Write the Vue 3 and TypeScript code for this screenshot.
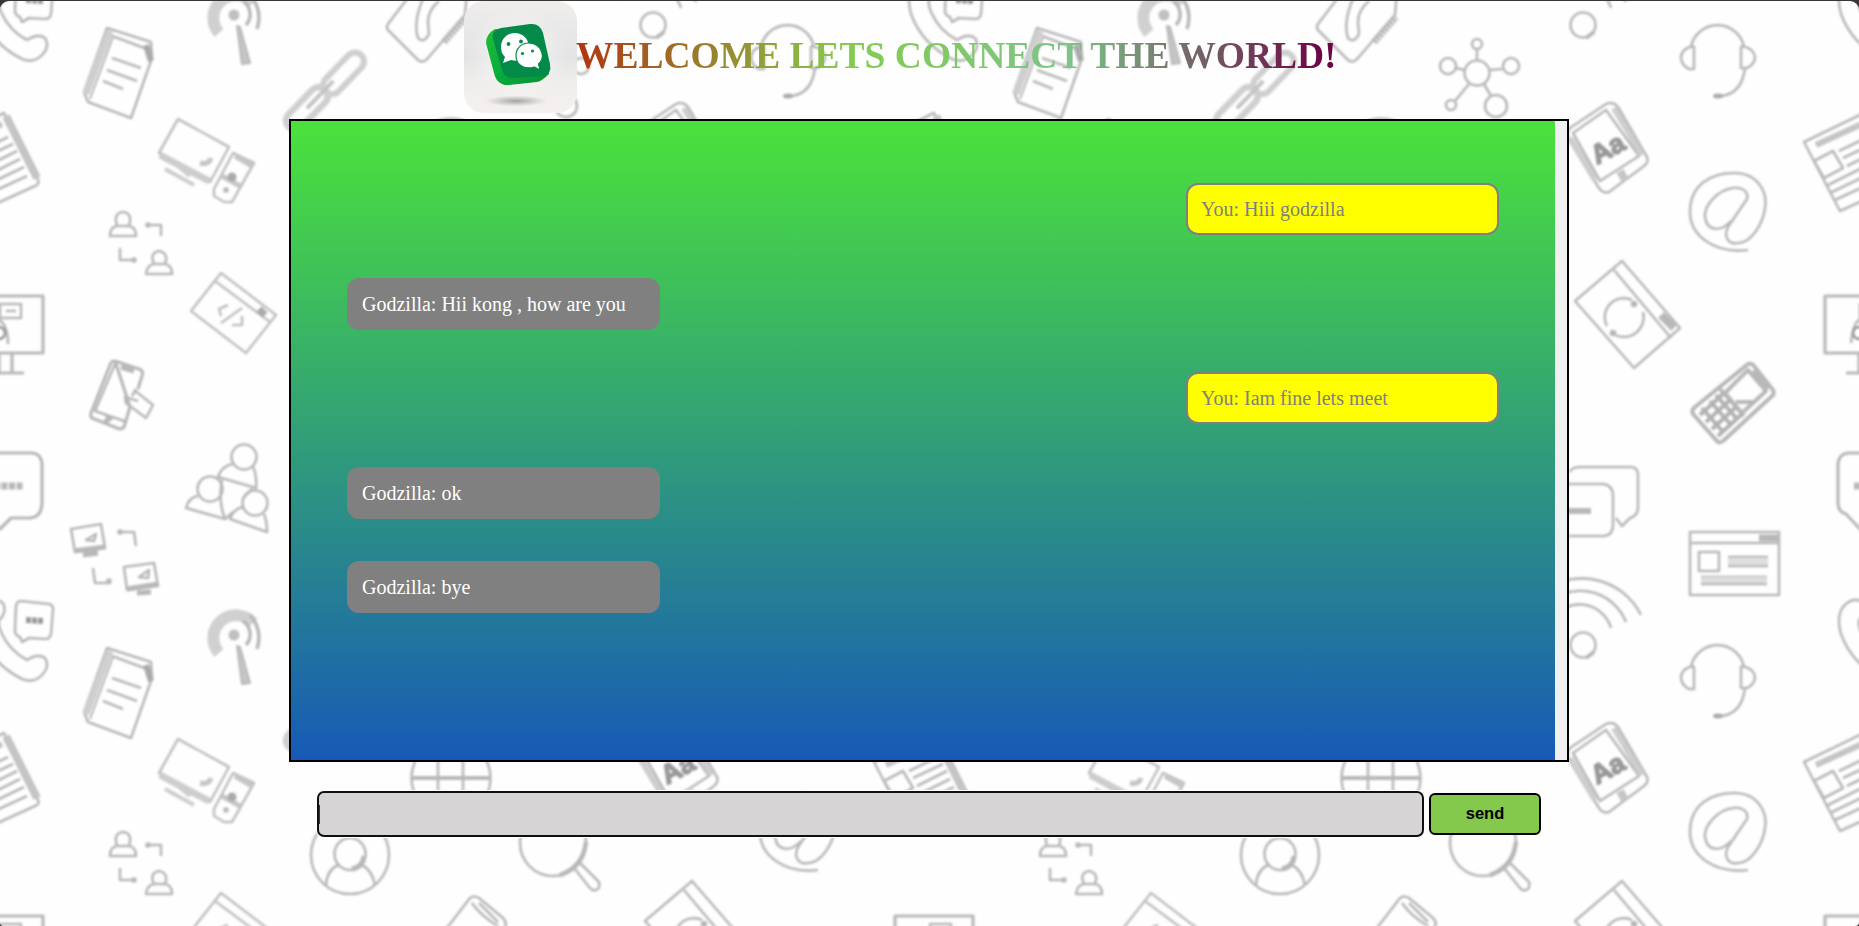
<script setup lang="ts">
import { ref } from 'vue'

interface Message {
  id: number
  author: string
  text: string
  mine: boolean
}

const messages = ref<Message[]>([
  { id: 1, author: 'You', text: 'Hiii godzilla', mine: true },
  { id: 2, author: 'Godzilla', text: 'Hii kong , how are you', mine: false },
  { id: 3, author: 'You', text: 'Iam fine lets meet', mine: true },
  { id: 4, author: 'Godzilla', text: 'ok', mine: false },
  { id: 5, author: 'Godzilla', text: 'bye', mine: false },
])

const draft = ref('')

function send(): void {
  const text = draft.value.trim()
  if (!text) return
  messages.value.push({ id: messages.value.length + 1, author: 'You', text, mine: true })
  draft.value = ''
}

// Origins of the repeated 930 x 620 wallpaper tile.
const tiles = [0, 620].flatMap((y) => [0, 930, 1860].map((x) => ({ x, y })))
</script>

<template>
  <div class="window">
    <div class="page">
      <svg class="wallpaper" viewBox="0 1 1859 925" aria-hidden="true">
        <defs>
          <filter id="soft" x="0" y="0" width="100%" height="100%"><feGaussianBlur stdDeviation="0.95" /></filter>
          <g id="tile" fill="none" stroke="#b8b8b8" stroke-width="2.6" stroke-linejoin="round">
            <!-- phone with bubble -->
            <path d="M21 -19 L49 -16 Q53 -15 53 -11 L51 14 Q50 19 45 19 L29 18 L22 22 L20 17 Q14 15 15 9 L16 -14 Q17 -19 21 -19Z" />
            <path d="M26 0 L43 1" stroke-width="6" stroke="#999" stroke-dasharray="5 1" />
            <path d="M-1 0 Q-2 6 2 14 Q10 31 27 40 Q38 33 45 38 Q50 46 43 54 Q34 64 22 59 Q-8 44 -19 14 Q-25 -8 -13 -17 Q-2 -24 4 -15 Q6 -5 -1 0Z" />
            <!-- notebook -->
            <path d="M107 28 L151 42 L152 58 L131 118 L88 102 L84 92Z M112 36 L147 49" />
            <path d="M110 31 L86 94" stroke-width="7" stroke="#cfcfcf" />
            <path d="M113 37 L90 99" stroke-width="2" />
            <path d="M146 45 L151 61" stroke-width="6" stroke="#aaa" />
            <path d="M112 58 L141 68 M107 70 L137 81 M103 81 L123 89" />
            <!-- antenna -->
            <path d="M219 33 A22 22 0 1 1 253 3" stroke-width="12" stroke="#d0d0d0" />
            <path d="M243 1 A16 16 0 0 1 246 25 M250 -5 Q263 10 257 29" stroke-width="3.5" />
            <circle cx="234" cy="15" r="5.5" fill="#c0c0c0" stroke="none" />
            <path d="M237 26 L242 64 L250 63 L240 27Z" fill="#c6c6c6" stroke-width="2" />
            <!-- computer -->
            <path d="M178 119 L229 147 L210 182 L159 153Z M233 153 L254 163 L232 202 L224 202 L214 196 L214 189Z" stroke="#c0c0c0" />
            <path d="M160 155 L209 181" stroke-width="7" stroke="#cdcdcd" />
            <path d="M178 166 L190 176 M165 169 L194 185" stroke-width="4" stroke="#cdcdcd" />
            <path d="M200 163 Q209 165 211 158 M235 156 L252 166 M222 176 L240 186" stroke-width="5" stroke="#c6c6c6" />
            <circle cx="232" cy="177" r="4.500" fill="#aaa" stroke="none" />
            <circle cx="226" cy="190" r="1.500" />
            <!-- linked users -->
            <path d="M110 236 Q110 227 117 226 Q113 213 123 212 Q133 213 129 226 Q136 227 136 236Z M117 226 H129 M161 236 V225 H146 M120 248 V260 H136" />
            <path d="M146 274 Q147 265 154 264 Q149 253 159 251 Q169 253 165 264 Q172 265 172 274Z M154 264 H165" />
            <circle cx="148" cy="225" r="1.500" /><circle cx="134" cy="260" r="1.500" />
            <!-- code window -->
            <path d="M221 273 L276 315 L246 353 L191 311Z M215 281 L270 322" stroke="#c0c0c0" />
            <path d="M228 305 L219 309 L221 316 M242 308 L221 323 M242 316 L242 325 L232 325" stroke="#c0c0c0" />
            <path d="M259 309 L265 315" stroke-width="7" stroke="#aaa" />
            <!-- presentation -->
            <path d="M-35 296 H43 V353 H-35Z M12 354 V373 M-1 354 V373 M-14 373 H24" stroke-width="3.2" />
            <path d="M0 304 H21 V318 H0Z M6 311 H16" stroke-width="2.5" />
            <path d="M-9 343 Q-7 324 -1 320 Q8 325 8 344" /><circle cx="-1" cy="333" r="6" stroke="#999" />
            <!-- touch phone -->
            <path d="M115 361 L139 369 Q144 371 142 376 L138 389 M130 407 L124 427 Q121 430 117 428 L92 418 Q90 416 91 413 L110 365 Q111 361 115 361Z" stroke-width="3.2" />
            <path d="M115 364 L95 411 L127 422 M104 414 L112 420" />
            <path d="M121 367 L134 371 M105 422 L110 418" stroke-width="5" />
            <path d="M134 390 L153 405 L146 418 L126 403 L125 397 L138 401 M132 396 L136 389" />
            <!-- team -->
            <circle cx="244" cy="457" r="12.5" /><circle cx="210" cy="489" r="12.5" /><circle cx="255" cy="503" r="12.5" />
            <path d="M232 464 Q221 467 218 477 L256 488 Q257 475 253 467 M198 496 Q189 497 186 508 L225 519 Q218 502 222 480 M243 507 Q233 509 230 519 L267 532 Q267 521 264 514 M225 519 L233 512 M252 489 L243 498" />
            <!-- chat bubble -->
            <path d="M-10 453 H31 Q42 453 42 466 V502 Q42 517 30 518 H11 L0 529 L-14 514 Q-22 512 -22 503 V466 Q-22 453 -10 453Z" stroke-width="3.2" />
            <path d="M-6 486 H23" stroke-width="7" stroke-dasharray="6 1.5" />
            <!-- linked monitors -->
            <path d="M71 529 L101 524 L105 548 L75 552Z M124 567 L154 563 L158 586 L127 590Z M118 532 H134 L136 546 M93 568 L95 583 H111" />
            <circle cx="120" cy="532" r="1.500" /><circle cx="109" cy="581" r="1.500" />
            <path d="M74 551 L105 547 M127 589 L158 584 M83 555 L98 553 M137 593 L151 592" stroke-width="5" />
            <path d="M86 540 L96 534 L94 541Z M139 577 L149 570 L148 578Z" />
            <!-- newspaper -->
            <path d="M-56 142 L4 113 L38 180 Q40 184 35 186 L-20 211Z" />
            <path d="M6 116 L37 178" stroke-width="8" stroke="#c4c4c4" />
            <path d="M-44 145 L2 124" stroke-width="6" stroke="#c4c4c4" />
            <path d="M-46 161 L-27 151 L-17 168 L-36 178Z M-21 151 L8 137 M-17 158 L13 144 M-13 166 L17 151 M-34 186 L20 159 M-30 193 L24 167 M-25 200 L27 176" />
            <!-- chain -->
            <g transform="rotate(-46 325 91)">
              <rect x="274" y="81" width="52" height="18" rx="9" stroke-width="6.5" stroke="#cfcfcf" />
              <rect x="325" y="83" width="51" height="18" rx="9" stroke-width="6" stroke="#cfcfcf" />
              <path d="M300 90 H338" stroke-width="4" stroke="#c4c4c4" />
            </g>
            <!-- contacts card -->
            <path d="M407 -1 L388 24 Q385 28 390 32 L418 60 Q423 64 428 58 L465 15 L467 -10" />
            <path d="M427 -10 Q412 20 418 38 Q424 44 429 34 L428 22 Q428 10 439 1" />
            <path d="M444 42 L466 17" stroke-width="7" stroke-dasharray="3 1" />
            <!-- twin bubbles -->
            <path d="M640 472 Q642 467 650 467 H701 Q708 467 708 476 V507 Q708 516 700 518 L692 526 L686 518 M600 484 H673 Q683 485 683 496 V525 Q683 536 673 536 H600" />
            <path d="M635 511 H661" stroke-width="6" />
            <!-- wireless -->
            <circle cx="653" cy="25" r="12.5" /><path d="M656 38 L664 32" stroke-width="4" />
            <path d="M622 -1 A33 33 0 0 1 681 8 M614 -13 A49 49 0 0 1 696 2 M606 -23 A66 66 0 0 1 711 -5" />
            <!-- headset -->
            <path d="M761 47 A27 27 0 0 1 814 47 M764 46 V69 H759 Q751 65 751 57 Q752 48 764 46 M811 46 V68 H817 Q825 64 825 57 Q824 48 811 46 M815 68 Q812 93 792 96" />
            <ellipse cx="788" cy="96" rx="5" ry="2.500" fill="#aaa" stroke="none" />
            <!-- network -->
            <circle cx="547" cy="73" r="12.5" /><circle cx="547" cy="44" r="5" /><circle cx="518" cy="66" r="8" /><circle cx="581" cy="66" r="8" /><circle cx="521" cy="105" r="5" /><circle cx="566" cy="106" r="11" />
            <path d="M547 49 V61 M526 68 L534 70 M560 70 L572 69 M539 84 L525 101 M554 84 L561 96" />
            <!-- reader -->
            <path d="M676 104 Q683 101 688 107 L717 157 Q719 162 714 166 L679 192 Q673 194 669 188 L638 138 Q636 132 640 128Z M676 110 L643 133 L670 181 L709 156Z" />
            <path d="M684 108 L712 155 M640 138 L665 180" stroke-width="6" stroke="#cdcdcd" />
            <path d="M690 171 L695 180" stroke-width="8" stroke="#c6c6c6" />
            <text class="reader-letters" transform="translate(667 165) rotate(-29)">Aa</text>
            <!-- at sign -->
            <path d="M818 250 C785 254 760 236 760 212 C760 184 782 173 804 173 C826 173 838 190 835 208 C833 224 821 243 808 243 C799 245 793 237 798 227 L817 199 C819 190 810 187 803 188 C787 190 774 206 775 217 C777 232 791 232 801 221" />
            <!-- refresh window -->
            <path d="M692 261 L750 328 L704 368 L645 301Z M684 270 L741 338" />
            <path d="M677 326 A19 19 0 0 1 702 300 M713 312 A20 20 0 0 1 683 334" />
            <circle cx="704" cy="304" r="2" fill="#aaa" /><circle cx="683" cy="333" r="2" fill="#aaa" />
            <path d="M731 315 L744 328" stroke-width="8" />
            <!-- keypad phone -->
            <path d="M818 364 Q822 363 824 366 L843 390 Q845 394 841 397 L793 441 Q789 444 786 440 L763 414 Q761 410 765 407Z" stroke-width="4" />
            <path d="M818 370 L836 391 L812 413 L795 393Z M790 389 L814 416" stroke-width="4" />
            <path d="M824 370 L839 388" stroke-width="6" />
            <path d="M772 408 L794 433 M780 401 L802 426 M786 395 L808 420 M788 436 L812 414 M782 429 L806 407 M776 422 L800 400 M770 415 L794 393" stroke-width="4" stroke="#b2b2b2" />
            <path d="M806 402 H825" stroke-width="4" />
            <!-- web page -->
            <path d="M760 532 H849 V595 H760Z M760 543 H849 M769 552 H789 V571 H769Z M798 557 H838 M798 566 H838 M771 577 H837 M771 584 H837" />
            <path d="M798 562 H838 M771 580 H837" stroke-width="6" stroke="#dedede" />
            <path d="M829 538 H848" stroke-width="7" />
            <!-- globe -->
            <circle cx="451" cy="158" r="39.5" /><path d="M411 158 H491" stroke-width="4" /><path d="M438 121 V195 M463 121 V195" />
            <!-- profile -->
            <circle cx="350" cy="235" r="39" /><ellipse cx="350" cy="234" rx="15.5" ry="16" />
            <path d="M338 245 Q327 250 326 265 M362 245 Q372 250 375 265" /><path d="M352 249 Q363 247 364 236" stroke-width="5" />
            <!-- magnifier -->
            <circle cx="553" cy="223" r="33" /><path d="M560 255 Q583 247 586 222" stroke-width="4.500" />
            <path d="M574 248 L580 243 L598 261 Q601 264 598 269 Q593 272 590 268Z" />
            <!-- tilted handset -->
            <path d="M447 308 L470 278 Q474 275 479 278 L503 298 Q508 303 504 309 M472 283 Q481 296 498 306 M479 283 L498 302" />
          </g>
        </defs>
        <g filter="url(#soft)">
          <use v-for="tile in tiles" :key="`${tile.x}-${tile.y}`" href="#tile" :x="tile.x" :y="tile.y" />
        </g>
      </svg>

      <header class="header">
        <svg class="logo" viewBox="464 1 113 112" aria-hidden="true">
          <defs>
            <linearGradient id="backdrop" x2="0" y2="1">
              <stop offset="0" stop-color="#f0eeec" />
              <stop offset=".25" stop-color="#e9e8e8" />
              <stop offset=".5" stop-color="#e3e4e5" />
              <stop offset=".7" stop-color="#efedeb" />
              <stop offset="1" stop-color="#f4f0ef" />
            </linearGradient>
            <radialGradient id="glow"><stop stop-color="#fff" stop-opacity=".65" /><stop offset="1" stop-color="#fff" stop-opacity="0" /></radialGradient>
            <radialGradient id="shade"><stop stop-color="#888" stop-opacity=".75" /><stop offset="1" stop-color="#999" stop-opacity="0" /></radialGradient>
            <linearGradient id="side" x2="1" y2="1"><stop stop-color="#20bd35" /><stop offset=".5" stop-color="#08ad3b" /><stop offset="1" stop-color="#0b8f33" /></linearGradient>
          </defs>
          <rect x="464" y="1" width="113" height="112" fill="url(#backdrop)" />
          <ellipse cx="518" cy="55" rx="52" ry="45" fill="url(#glow)" />
          <ellipse cx="516" cy="101" rx="31" ry="5.500" fill="url(#shade)" />
          <path d="M495 29 Q486 34 486 43 L494 73 Q497 86 509 85 L537 82 Q542 81 549 74 L540 34Z" fill="url(#side)" />
          <path d="M501 28 L530 24 Q540 23 543 33 L550 64 Q552 74 543 76 L515 78 Q505 79 502 70 L493 39 Q491 30 501 28Z" fill="#048a48" />
          <path d="M515 33 C507 33 501 39 501 47 C501 51 502 54 505 57 L503 63 L511 60 C522 63 530 55 529 46 C528 38 522 33 515 33Z" fill="#fff" />
          <path d="M529 43 C521 43 515.500 49 516 56 C516 65 525 70 534 67 L540 70 L538.500 64 C542 61 543 57 542 53 C541 47 535 43 529 43Z" fill="#fff" stroke="#048a48" stroke-width="1.200" />
          <g fill="#048a48"><circle cx="508.500" cy="44" r="1.900" /><circle cx="521" cy="41.500" r="1.900" /><circle cx="522.500" cy="53.500" r="1.600" /><circle cx="532.500" cy="51" r="1.600" /></g>
        </svg>
        <h1 class="title">WELCOME LETS CONNECT THE WORLD!</h1>
      </header>

      <main class="chat">
        <div class="thread">
          <p v-for="m in messages" :key="m.id" class="message" :class="m.mine ? 'mine' : 'theirs'">
            {{ m.author }}: {{ m.text }}
          </p>
        </div>
        <div class="scrollbar"></div>
      </main>

      <form class="composer" @submit.prevent="send">
        <div class="field">
          <span class="caret"></span>
          <input v-model="draft" class="input" type="text" aria-label="Message" />
        </div>
        <button class="send" type="submit">send</button>
      </form>
    </div>
  </div>
</template>

<style>
body {
  margin: 0;
  overflow: hidden;
}
</style>

<style scoped>
.window {
  box-sizing: border-box;
  height: 926px;
  padding-top: 1px;
  background: #3a3638;
  font-family: "Liberation Serif", "Times New Roman", serif;
}
.page {
  position: relative;
  display: flex;
  flex-direction: column;
  align-items: center;
  height: 925px;
  overflow: hidden;
  border-radius: 9px 9px 4px 4px;
  background: #fefefe;
}
.wallpaper {
  position: absolute;
  inset: 0;
  width: 1859px;
  height: 925px;
}
.reader-letters {
  fill: #999;
  stroke: #999;
  stroke-width: 1.5px;
  font: bold 27px "Liberation Sans", Arial, sans-serif;
}
.header {
  position: relative;
  display: flex;
  align-items: center;
  width: 931px;
  height: 112px;
  margin-bottom: 6px;
}
.logo {
  flex: none;
  width: 113px;
  height: 112px;
  border-radius: 20px;
}
.title {
  margin: 0 0 2px -1px;
  font-size: 37.5px;
  line-height: 44px;
  white-space: nowrap;
  color: transparent;
  background: linear-gradient(90deg, #b03510, #84cc4c 35%, #7cc488 65%, #6d0545 98%);
  -webkit-background-clip: text;
  background-clip: text;
}
.chat {
  position: relative;
  box-sizing: border-box;
  display: flex;
  width: 1280px;
  height: 643px;
  margin-right: 1px;
  border: 2px solid #000;
}
.thread {
  box-sizing: border-box;
  flex: 1;
  display: flex;
  flex-direction: column;
  gap: 42.5px;
  padding: 62px 56px 0;
  background: linear-gradient(#4be23b, #175ab6);
}
.scrollbar {
  width: 12px;
  background: #f0f0f0;
}
.message {
  box-sizing: border-box;
  width: 313px;
  height: 52px;
  margin: 0;
  padding: 0 13px;
  border: 2px solid #808080;
  border-radius: 12px;
  font-size: 20px;
  line-height: 48px;
}
.mine {
  align-self: flex-end;
  background: #ff0;
  color: #808080;
}
.theirs {
  align-self: flex-start;
  background: #808080;
  color: #fff;
}
.composer {
  position: relative;
  display: flex;
  align-items: center;
  gap: 5px;
  margin-top: 29px;
  width: 1225px;
}
.field {
  box-sizing: border-box;
  display: flex;
  align-items: center;
  width: 1107px;
  height: 46px;
  border: 2px solid #101010;
  border-radius: 7px;
  background: #d6d4d5;
  box-shadow: 0 0 0 1px #fff;
}
.caret {
  width: 1px;
  height: 19px;
  background: #b00000;
}
.input {
  flex: 1;
  min-width: 0;
  padding: 0;
  border: 0;
  outline: 0;
  background: transparent;
  font-size: 17px;
}
.send {
  box-sizing: border-box;
  width: 112px;
  height: 42px;
  padding: 0 0 2px;
  border: 2px solid #000;
  border-radius: 6px;
  background: #84c94b;
  color: #000;
  font: bold 16.5px "Liberation Sans", Arial, sans-serif;
}
</style>
